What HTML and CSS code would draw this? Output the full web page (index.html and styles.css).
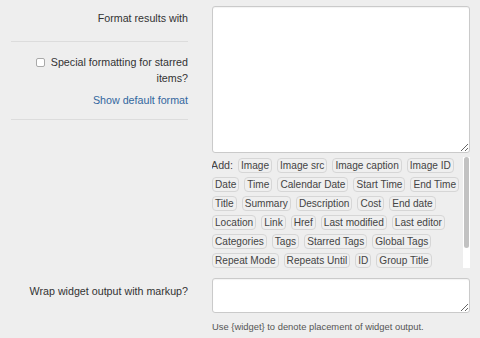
FILE: index.html
```html
<!DOCTYPE html>
<html lang="en">
<head>
	<meta charset="UTF-8">
	<title>Widget format</title>
	<link rel="stylesheet" href="styles.css">
</head>
<body>

<form class="settings">
	<!-- format row -->
	<div class="row">
		<div class="label-col">
			<div class="label-block first">Format results with</div>
			<div class="label-block second">
				<label class="check-label"><span class="checkbox"></span>Special formatting for starred items?</label>
				<a class="link" href="#">Show default format</a>
			</div>
		</div>
		<div class="field-col">
			<textarea class="format-input"></textarea>
			<div class="tag-box">
				<div class="tag-list">
					<span class="add">Add:</span>
					<span class="tag">Image</span>
					<span class="tag">Image src</span>
					<span class="tag">Image caption</span>
					<span class="tag">Image ID</span>
					<span class="tag">Date</span>
					<span class="tag">Time</span>
					<span class="tag">Calendar Date</span>
					<span class="tag">Start Time</span>
					<span class="tag">End Time</span>
					<span class="tag">Title</span>
					<span class="tag">Summary</span>
					<span class="tag">Description</span>
					<span class="tag">Cost</span>
					<span class="tag">End date</span>
					<span class="tag">Location</span>
					<span class="tag">Link</span>
					<span class="tag">Href</span>
					<span class="tag">Last modified</span>
					<span class="tag">Last editor</span>
					<span class="tag">Categories</span>
					<span class="tag">Tags</span>
					<span class="tag">Starred Tags</span>
					<span class="tag">Global Tags</span>
					<span class="tag">Repeat Mode</span>
					<span class="tag">Repeats Until</span>
					<span class="tag">ID</span>
					<span class="tag">Group Title</span>
				</div>
				<div class="scrollbar"><div class="thumb"></div></div>
			</div>
		</div>
	</div>

	<!-- wrap row -->
	<div class="row wrap-row">
		<div class="label-col">
			<div class="label-plain">Wrap widget output with markup?</div>
		</div>
		<div class="field-col">
			<textarea class="wrap-input"></textarea>
			<p class="help">Use {widget} to denote placement of widget output.</p>
		</div>
	</div>
</form>

</body>
</html>
```

FILE: styles.css
```css
body {
	margin: 0;
	background-color: #eeeeee;
	font-family: "Liberation Sans", Arial, sans-serif;
	font-size: 10.7px;
	color: #333;
}

.settings {
	padding: 6px 0 0 11px;
}

.row {
	display: grid;
	grid-template-columns: 177px 258px;
	column-gap: 24px;
}

.wrap-row {
	margin-top: 10px;
}

.label-col {
	text-align: right;
	line-height: 16px;
}

.label-block {
	border-bottom: 1px solid #dcdcdc;
}

.label-block.first {
	padding: 4px 0 15px;
}

.label-block.second {
	padding: 12px 0 11px;
}

.check-label {
	display: block;
}

.checkbox {
	display: inline-block;
	width: 9px;
	height: 9px;
	box-sizing: border-box;
	border: 1px solid #a9a9a9;
	border-radius: 2px;
	background-color: #fff;
	margin-right: 6px;
	vertical-align: -1px;
}

.link {
	display: block;
	margin-top: 6px;
	color: #33679e;
	text-decoration: none;
}

.label-plain {
	padding-top: 5px;
}

textarea {
	display: block;
	box-sizing: border-box;
	width: 100%;
	margin: 0;
	border: 1px solid #cacaca;
	border-radius: 3px;
	background-color: #fff;
	box-shadow: inset 0 1px 1px rgba(0, 0, 0, 0.05);
	resize: vertical;
}

.format-input {
	height: 147px;
}

.wrap-input {
	height: 35px;
}

.tag-box {
	display: flex;
	height: 111px;
	margin-top: 4px;
}

.tag-list {
	flex: 1;
	display: flex;
	flex-wrap: wrap;
	align-content: flex-start;
	row-gap: 4px;
	column-gap: 5px;
	padding-top: 1px;
	overflow: hidden;
	font-size: 10.1px;
	color: #444;
}

.add {
	line-height: 15px;
	margin-left: -1px;
	font-size: 10.7px;
}

.tag {
	line-height: 13px;
	padding: 0 2px;
	border: 1px solid #d6d6d6;
	border-radius: 4px;
	background-color: #efefef;
	white-space: nowrap;
}

.scrollbar {
	width: 7px;
	margin-left: 1px;
	background-color: #fff;
}

.thumb {
	width: 5px;
	height: 91px;
	margin: 0 1px;
	border-radius: 3px;
	background-color: #c2c2c2;
}

.help {
	margin: 7px 0 0;
	font-size: 9.4px;
	line-height: 13px;
	color: #555;
}
```
